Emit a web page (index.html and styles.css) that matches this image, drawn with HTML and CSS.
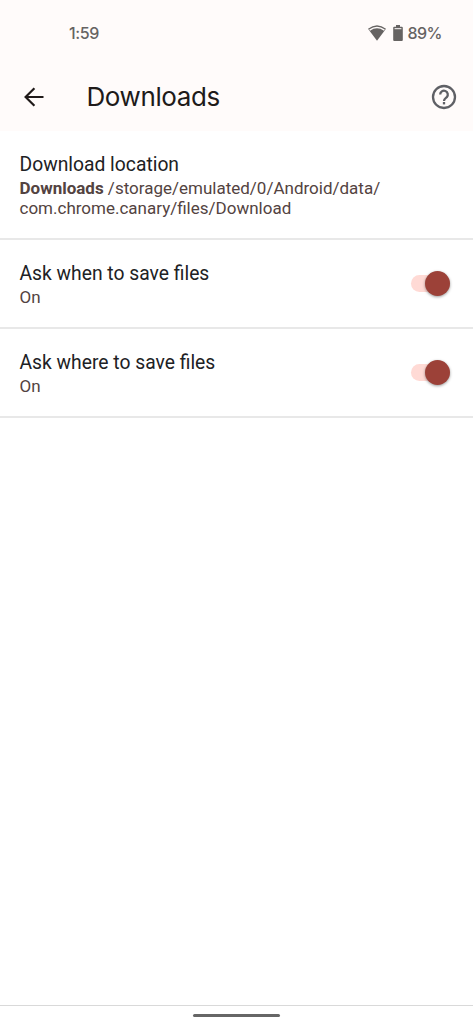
FILE: index.html
```html
<!DOCTYPE html>
<html lang="en">
<head>
<meta charset="utf-8">
<title>Downloads</title>
<link rel="stylesheet" href="styles.css">
</head>
<body>
<div class="screen">
  <header class="header">
    <div class="status">
      <span class="time">1:59</span>
      <div class="indicators">
        <svg class="wifi" width="18" height="16" viewBox="0 0 18 16"><path d="M0 3.700Q9-3.300 18 3.700L9 15.800Z" fill="#666362"/><path d="M1.600 5.100Q9-.1 16.400 5.100" fill="none" stroke="#fffbfa" stroke-width="1.500"/></svg>
        <svg class="battery" width="10" height="16" viewBox="0 0 10 16"><path d="M3 0h4v1.700h1.800Q9.800 1.700 9.800 2.700V15q0 1-1 1H1.200q-1 0-1-1V2.700q0-1 1-1H3Z" fill="#666362"/><path d="M1.600 3.700h6.800" stroke="#fffbfa" stroke-width="1"/></svg>
        <span class="percent">89%</span>
      </div>
    </div>
    <div class="appbar">
      <svg class="back" width="20" height="20" viewBox="0 0 20 20" fill="none" stroke="#201a19" stroke-width="2.200"><path d="M19.500 10H2M10.400 1.200 1.600 10l8.800 8.800"/></svg>
      <h1 class="title">Downloads</h1>
      <svg class="help" width="26" height="26" viewBox="0 0 26 26" fill="none" stroke="#5f6065" stroke-width="2.300"><circle cx="13" cy="13" r="11"/><path d="M9.200 10.600a3.800 3.800 0 1 1 6.600 2.500c-1.300 1.200-2.800 1.800-2.800 3.800"/><path d="M13 18v2.400"/></svg>
    </div>
  </header>
  <main class="list">
    <section class="row location">
      <div class="text">
        <h2 class="name">Download location</h2>
        <p class="detail path"><b>Downloads</b> /storage/emulated/0/Android/data/<br>com.chrome.canary/files/Download</p>
      </div>
    </section>
    <section class="row">
      <div class="text">
        <h2 class="name">Ask when to save files</h2>
        <p class="detail">On</p>
      </div>
      <div class="switch"><span class="thumb"></span></div>
    </section>
    <section class="row">
      <div class="text">
        <h2 class="name">Ask where to save files</h2>
        <p class="detail">On</p>
      </div>
      <div class="switch"><span class="thumb"></span></div>
    </section>
  </main>
  <footer class="nav"><span class="handle"></span></footer>
</div>
</body>
</html>
```
FILE: styles.css
```css
* { box-sizing: border-box; }
body { margin: 0; background: #fff; font-family: Roboto, sans-serif; }
.screen { height: 1024px; display: flex; flex-direction: column; overflow: hidden; }
.header { height: 131px; background: #fffbfa; flex: none; }
.status { height: 66px; padding: 0 31px 0 69px; display: flex; align-items: center; justify-content: space-between; color: #666362; font: 500 16px/20px Inter, sans-serif; }
.time { letter-spacing: -.4px; }
.indicators { display: flex; align-items: center; }
.battery { margin: 0 4px 0 7px; }
.percent { letter-spacing: -.5px; }
.appbar { height: 62px; display: flex; align-items: center; padding: 0 16px 0 24px; }
.title { margin: 0 auto 0 42.500px; font: 400 26px/32px Inter, sans-serif; letter-spacing: -.4px; color: #201a19; }
.list { flex: 1; }
.row { height: 89px; padding: 22px 23px 0 19.500px; display: flex; justify-content: space-between; border-bottom: 2px solid #e8e8e8; }
.location { height: 109px; }
.name { margin: 0; font-size: 19.300px; line-height: 24px; font-weight: 400; color: #202124; }
.detail { margin: 1px 0 0; font-size: 17px; line-height: 20px; color: #534341; white-space: nowrap; }
.switch { width: 39px; height: 17px; margin-top: 13px; border-radius: 9px; background: #ffdad5; display: flex; align-items: center; justify-content: flex-end; }
.thumb { width: 25px; height: 25px; flex: none; border-radius: 50%; background: #9c4138; box-shadow: 0 1px 3px rgba(0,0,0,.4); }
.nav { height: 19px; flex: none; border-top: 1px solid #d9d9d9; display: flex; justify-content: center; padding-top: 8px; }
.handle { width: 87px; height: 3px; border-radius: 2px; background: #666; }
```
